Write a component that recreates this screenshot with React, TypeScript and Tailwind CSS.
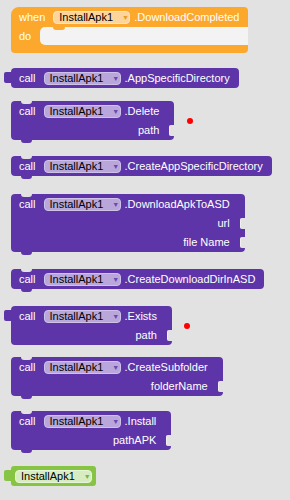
import React from 'react';

type Tone = 'purple' | 'orange' | 'green';

const font = { fontFamily: '"Liberation Sans", Arial, sans-serif' };

const Field = ({ tone }: { tone: Tone }) => {
    const cls =
        tone === 'purple'
            ? 'bg-[#b9a6da] border-[#cfc2e8]'
            : tone === 'orange'
            ? 'bg-[#fdd49c] border-[#fee3bd]'
            : 'bg-[#d7edc1] border-[#e6f4d8]';
    const arrow = tone === 'purple' ? 'text-[#6a48b0]' : tone === 'orange' ? 'text-[#e89a22]' : 'text-[#7cb342]';
    return (
        <div className={`flex items-center h-[13px] w-[77px] pl-[5px] rounded-[4px] border ${cls}`}>
            <span className="text-[11px] leading-none text-black">InstallApk1</span>
            <span className={`ml-[9px] text-[7px] leading-none ${arrow}`}>▼</span>
        </div>
    );
};

type BlockProps = {
    method: string;
    inputs?: string[];
    output?: boolean;
    className?: string;
};

const CallBlock = ({ method, inputs = [], output = false, className = '' }: BlockProps) => {
    const hasInputs = inputs.length > 0;
    return (
        <div className={`relative flex flex-col w-fit bg-[#5e35a8] rounded-[4px] ${className}`}>
            {output ? (
                <div className="absolute left-[-7px] top-[4px] w-[7px] h-[11px] bg-[#5e35a8] rounded-l-[2px]" />
            ) : (
                <>
                    <div className="absolute top-0 left-[10px] w-[11px] h-[3px] bg-[#e2e2e2] rounded-b-[4px]" />
                    <div className="absolute bottom-[-3px] left-[10px] w-[11px] h-[3px] bg-[#5e35a8] rounded-b-[4px]" />
                </>
            )}
            <div className={`flex items-center h-[20px] pl-[8px] ${hasInputs ? 'pr-[15px]' : 'pr-[9px]'}`}>
                <span className="text-[11px] text-white leading-none mr-[8px]">call</span>
                <Field tone="purple" />
                <span className="text-[11px] text-white leading-none ml-[4px]">.{method}</span>
            </div>
            {inputs.map((label) => (
                <div key={label} className="relative flex items-center justify-end h-[19px] pr-[15px]">
                    <span className="text-[11px] text-white leading-none">{label}</span>
                    <div className="absolute right-0 top-[4px] w-[5px] h-[11px] bg-[#e2e2e2] rounded-l-[2px] border-l border-[#f0f0f0]" />
                </div>
            ))}
        </div>
    );
};

const Dot = () => <div className="w-[6px] h-[6px] rounded-full bg-[#ff0000]" />;

export default function App() {
    return (
        <div className="w-[290px] h-[500px] overflow-hidden bg-[#e2e2e2] pl-[11px] flex flex-col items-start" style={font}>
            {/* event block */}
            <div className="relative mt-[7px] flex flex-col w-fit bg-[#fba82c] rounded-[4px] rounded-tl-[8px]">
                <div className="flex items-center h-[20px] pl-[8px] pr-[9px]">
                    <span className="text-[11px] text-white leading-none mr-[8px]">when</span>
                    <Field tone="orange" />
                    <span className="text-[11px] text-white leading-none ml-[4px]">.DownloadCompleted</span>
                </div>
                <div className="flex h-[18px]">
                    <div className="w-[29px] pl-[8px] flex items-center">
                        <span className="text-[11px] text-white leading-none">do</span>
                    </div>
                    <div className="relative flex-1 bg-[#f3f3f3] rounded-l-[5px]">
                        <div className="absolute top-0 left-[13px] w-[12px] h-[3px] bg-[#fba82c] rounded-b-[4px]" />
                    </div>
                </div>
                <div className="h-[8px]" />
            </div>

            <CallBlock className="mt-[15px]" method="AppSpecificDirectory" output />

            <div className="mt-[13px] flex items-center gap-[13px]">
                <CallBlock method="Delete" inputs={['path']} />
                <Dot />
            </div>

            <CallBlock className="mt-[16px]" method="CreateAppSpecificDirectory" />

            <CallBlock className="mt-[18px]" method="DownloadApkToASD" inputs={['url', 'file Name']} />

            <CallBlock className="mt-[17px]" method="CreateDownloadDirInASD" />

            <div className="mt-[17px] flex items-center gap-[12px]">
                <CallBlock method="Exists" inputs={['path']} output />
                <Dot />
            </div>

            <CallBlock className="mt-[12px]" method="CreateSubfolder" inputs={['folderName']} />

            <CallBlock className="mt-[15px]" method="Install" inputs={['pathAPK']} />

            {/* component getter */}
            <div className="relative mt-[16px] flex items-center h-[20px] w-fit px-[4px] bg-[#87c443] rounded-[3px]">
                <div className="absolute left-[-7px] top-[4px] w-[7px] h-[11px] bg-[#87c443] rounded-l-[2px]" />
                <Field tone="green" />
            </div>
        </div>
    );
}
